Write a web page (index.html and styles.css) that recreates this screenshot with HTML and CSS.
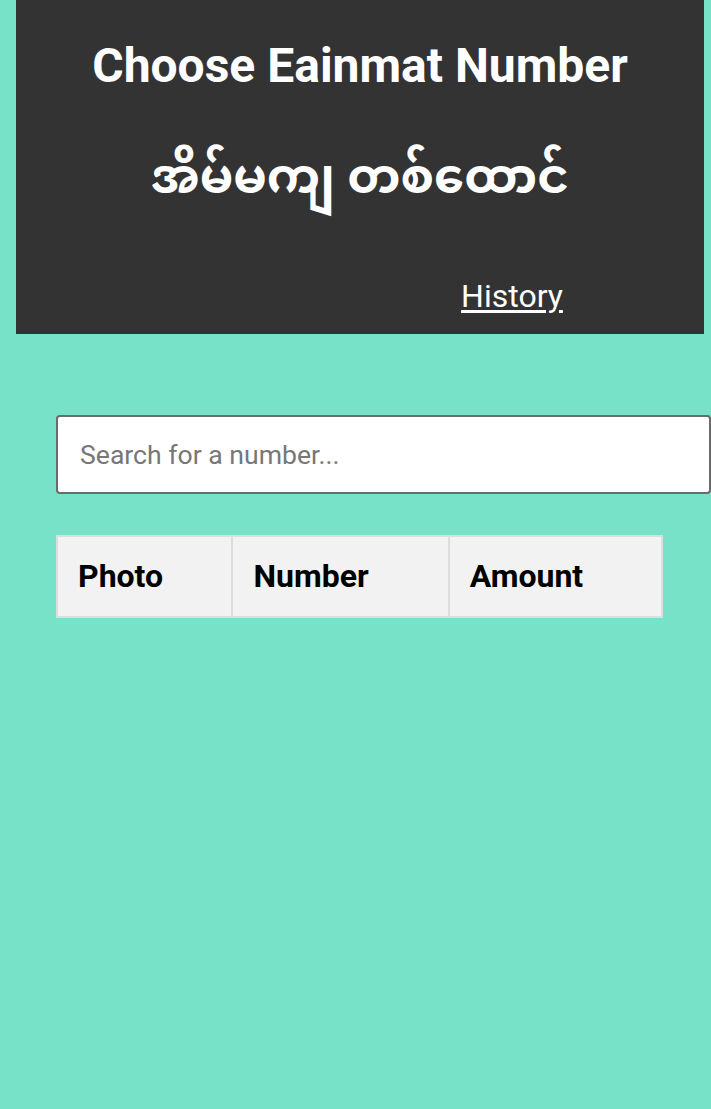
FILE: index.html
```html
<!DOCTYPE html>
<html lang="en">
<head>
<meta charset="utf-8">
<title>Choose Eainmat Number</title>
<link rel="stylesheet" href="styles.css">
</head>
<body>
<header class="header">
  <h1 class="title">Choose Eainmat Number</h1>
  <h2 class="subtitle">အိမ်မကျ တစ်ထောင်</h2>
  <nav class="nav"><a class="nav-link" href="#">History</a></nav>
</header>
<main class="content">
  <input class="search" type="text" placeholder="Search for a number...">
  <table class="numbers">
    <thead>
      <tr>
        <th class="col-photo">Photo</th>
        <th class="col-number">Number</th>
        <th class="col-amount">Amount</th>
      </tr>
    </thead>
    <tbody></tbody>
  </table>
</main>
</body>
</html>
```

FILE: styles.css
```css
html, body {
  height: 100%;
}
body {
  margin: 0 0 0 16px;
  background: #77e2c8;
  font-family: Roboto, "Noto Sans Myanmar", "Padauk", "Myanmar Text", sans-serif;
  overflow-x: hidden;
}
.header {
  background: #333333;
  color: #ffffff;
  width: 688px;
  height: 334px;
  box-sizing: border-box;
  padding-top: 38px;
  border-bottom: 3px solid #223a33;
  text-align: center;
}
.title {
  margin: 0;
  font-size: 48px;
  font-weight: 700;
  line-height: 56px;
}
.subtitle {
  margin: 53px 0 0;
  font-size: 48px;
  font-weight: 700;
  line-height: 70px;
  font-family: "Noto Sans Myanmar", "Padauk", "Myanmar Text", Roboto, sans-serif;
}
.nav {
  margin-top: 60px;
  padding-left: 304px;
}
.nav-link {
  color: #ffffff;
  font-size: 32px;
  line-height: 38px;
  text-decoration: underline;
  text-underline-offset: 3px;
}
.content {
  padding: 81px 0 0 40px;
}
.search {
  display: block;
  box-sizing: border-box;
  width: 655px;
  height: 79px;
  margin: 0;
  padding: 0 22px;
  border: 2px solid #6b6b6b;
  border-radius: 4px;
  background: #ffffff;
  font-family: Roboto, sans-serif;
  font-size: 26.6px;
  color: #333333;
  outline: none;
}
.search::placeholder {
  color: #777777;
}
.numbers {
  margin-top: 41px;
  border-collapse: collapse;
  width: 607px;
}
.numbers th {
  background: #f2f2f2;
  border: 2px solid #dddddd;
  height: 81px;
  box-sizing: border-box;
  padding: 0 20px 2px;
  text-align: left;
  font-size: 32px;
  font-weight: 700;
  color: #000000;
}
.col-photo { width: 176px; }
.col-number { width: 217px; }
.col-amount { width: 214px; }
```
